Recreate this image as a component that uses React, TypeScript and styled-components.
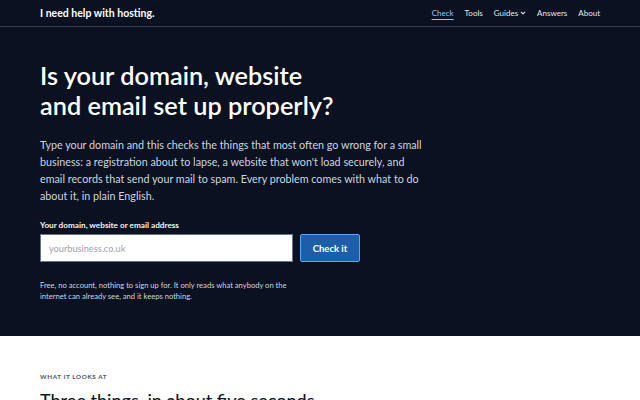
import React from 'react';
import styled, { createGlobalStyle } from 'styled-components';

const GlobalStyle = createGlobalStyle`
    body {
        margin: 0;
        background: #ffffff;
        font-family: Lato, "Open Sans", sans-serif;
    }
    * {
        box-sizing: border-box;
    }
`;

const Hero = styled.div`
    background-color: #0b1120;
    color: #f8fafc;
`;

const Header = styled.header`
    display: flex;
    align-items: center;
    justify-content: space-between;
    height: 27px;
    padding: 0 40px;
    border-bottom: 1px solid #334155;
`;

const Brand = styled.a`
    font-size: 10.5px;
    font-weight: 700;
    color: #ffffff;
`;

const Nav = styled.nav`
    display: flex;
    align-items: center;
    gap: 11px;
`;

const NavLink = styled.a<{ $active?: boolean }>`
    display: flex;
    align-items: center;
    gap: 2px;
    font-size: 8px;
    color: ${props => (props.$active ? '#93c5fd' : '#e2e8f0')};
    text-decoration: ${props => (props.$active ? 'underline' : 'none')};
    text-underline-offset: 3px;
`;

const Main = styled.section`
    padding: 33px 40px 34px;
`;

const Title = styled.h1`
    margin: 0;
    font-size: 25.3px;
    line-height: 30px;
    font-weight: 600;
    color: #ffffff;
`;

const Lead = styled.p`
    margin: 16px 0 0;
    max-width: 384px;
    font-size: 10.75px;
    line-height: 17px;
    color: #cbd5e1;
`;

const Label = styled.label`
    display: block;
    margin-top: 16px;
    font-size: 8.2px;
    font-weight: 700;
    color: #f1f5f9;
`;

const Row = styled.div`
    display: flex;
    gap: 7px;
    margin-top: 4px;
`;

const Field = styled.input`
    width: 253px;
    height: 28px;
    padding: 0 8px;
    border: 1px solid #64748b;
    background: #ffffff;
    font-family: inherit;
    font-size: 9.2px;
    color: #0f172a;

    &::placeholder {
        color: #9ca3af;
    }
`;

const Button = styled.button`
    width: 60px;
    height: 28px;
    border: 1px solid #60a5fa;
    border-radius: 2px;
    background: #1d5ea8;
    color: #ffffff;
    font-family: inherit;
    font-size: 9.5px;
    font-weight: 700;
`;

const Note = styled.p`
    margin: 18px 0 0;
    max-width: 260px;
    font-size: 7.6px;
    line-height: 11px;
    color: #cbd5e1;
`;

const Section = styled.section`
    padding: 37px 40px 0;
`;

const Eyebrow = styled.div`
    font-size: 6.3px;
    font-weight: 700;
    letter-spacing: 0.6px;
    text-transform: uppercase;
    color: #4b5563;
`;

const SectionTitle = styled.h2`
    margin: 9px 0 0;
    font-size: 18px;
    font-weight: 500;
    color: #0f172a;
`;

const Chevron = () => (
    <svg width="6" height="6" viewBox="0 0 10 10" fill="none">
        <path d="M2 3.5 L5 6.5 L8 3.5" stroke="#e2e8f0" strokeWidth="1.8" strokeLinecap="round" strokeLinejoin="round" />
    </svg>
);

const App = () => {
    return (
        <>
            <GlobalStyle />
            <Hero>
                <Header>
                    <Brand>I need help with hosting.</Brand>
                    <Nav>
                        <NavLink $active>Check</NavLink>
                        <NavLink>Tools</NavLink>
                        <NavLink>
                            Guides <Chevron />
                        </NavLink>
                        <NavLink>Answers</NavLink>
                        <NavLink>About</NavLink>
                    </Nav>
                </Header>
                <Main>
                    <Title>
                        Is your domain, website
                        <br />
                        and email set up properly?
                    </Title>
                    <Lead>
                        Type your domain and this checks the things that most often go wrong for a small
                        business: a registration about to lapse, a website that won't load securely, and
                        email records that send your mail to spam. Every problem comes with what to do
                        about it, in plain English.
                    </Lead>
                    <Label htmlFor="domain">Your domain, website or email address</Label>
                    <Row>
                        <Field id="domain" placeholder="yourbusiness.co.uk" />
                        <Button>Check it</Button>
                    </Row>
                    <Note>
                        Free, no account, nothing to sign up for. It only reads what anybody on the
                        internet can already see, and it keeps nothing.
                    </Note>
                </Main>
            </Hero>
            <Section>
                <Eyebrow>What it looks at</Eyebrow>
                <SectionTitle>Three things, in about five seconds.</SectionTitle>
            </Section>
        </>
    );
};

export default App;
